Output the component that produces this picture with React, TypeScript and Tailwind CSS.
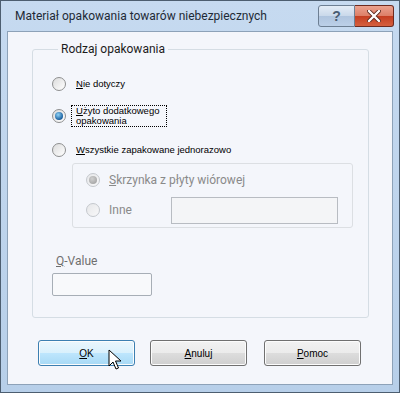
import React from "react";

const Radio = ({ checked = false, disabled = false }: { checked?: boolean; disabled?: boolean }) => (
  <span
    className={
      "flex h-[14px] w-[14px] shrink-0 items-center justify-center rounded-full border " +
      (disabled
        ? "border-[#c4c8cd] bg-gradient-to-br from-[#e6e7e9] to-[#f8f8f9]"
        : "border-[#8e8f8f] bg-gradient-to-br from-[#dcdcdc] to-[#ffffff]")
    }
  >
    {checked && (
      <span
        className={
          "h-[8px] w-[8px] rounded-full " +
          (disabled
            ? "bg-[radial-gradient(circle_at_40%_35%,#d0d0d0,#9a9a9a)]"
            : "bg-[radial-gradient(circle_at_40%_35%,#8fd3f7,#1a5f9e_70%,#0d3f73)]")
        }
      />
    )}
  </span>
);

const Button = ({ label, hot = false }: { label: React.ReactNode; hot?: boolean }) => (
  <div
    className={
      "flex h-[26px] w-[97px] items-center justify-center rounded-[3px] border text-[10px] text-black shadow-[inset_0_0_0_1px_#fcfcfc] " +
      (hot
        ? "border-[#3c7fb1] bg-[linear-gradient(#eaf6fd_0%,#d9f0fc_50%,#bee6fd_50%,#a7d9f5_100%)]"
        : "border-[#707070] bg-[linear-gradient(#f2f2f2_0%,#ebebeb_50%,#dddddd_50%,#cfcfcf_100%)]")
    }
  >
    {label}
  </div>
);

export default function App() {
  return (
    <div
      className="relative flex h-[393px] w-[400px] flex-col border border-[#4d5e70] bg-gradient-to-b from-[#c6daf0] to-[#b7cfe9]"
      style={{ fontFamily: "'Liberation Sans', Arial, sans-serif" }}
    >
      {/* title bar */}
      <div className="flex h-[30px] items-center pl-[14px] pr-[5px]">
        <span className="flex-1 text-[12px] text-[#1e2a36]" style={{ fontFamily: "Roboto, sans-serif" }}>
          Materiał opakowania towarów niebezpiecznych
        </span>
        <div className="flex h-[22px] w-[37px] items-center justify-center rounded-l-[3px] border border-[#6d7f93] bg-[linear-gradient(#e3ecf6_0%,#c9d8ea_50%,#afc4de_50%,#bcd0e8_100%)] text-[14px] font-bold text-[#4a5d72]">
          ?
        </div>
        <div className="flex h-[22px] w-[39px] items-center justify-center rounded-r-[3px] border border-l-0 border-[#6d2a1f] bg-[linear-gradient(#eba28f_0%,#dc7e66_50%,#c43d20_50%,#d5603f_100%)]">
          <svg width="14" height="12" viewBox="0 0 14 12">
            <path d="M2 1 L12 11 M12 1 L2 11" stroke="#5b2a20" strokeWidth="4" strokeLinecap="round" />
            <path d="M2 1 L12 11 M12 1 L2 11" stroke="#ffffff" strokeWidth="2.4" strokeLinecap="round" />
          </svg>
        </div>
      </div>

      {/* client area */}
      <div className="mx-[6px] mb-[7px] flex flex-1 flex-col border border-[#8da2b8] bg-[#f4f6fb]">
        <fieldset className="ml-[24px] mt-[10px] h-[276px] w-[337px] rounded-[3px] border border-[#d5dde4] pl-[19px]">
          <legend className="ml-[6px] px-[3px] text-[12px] leading-[14px] text-[#1c1c1c]" style={{ fontFamily: "Roboto, sans-serif" }}>
            Rodzaj opakowania
          </legend>

          <div className="mt-[21px] flex items-center gap-[10px]">
            <Radio />
            <span className="text-[9.5px] text-black">
              <u>N</u>ie dotyczy
            </span>
          </div>

          <div className="mt-[14px] flex items-center gap-[5px]">
            <Radio checked />
            <span className="w-[96px] border border-dotted border-black px-[4px] py-[0px] text-[9.5px] leading-[10px] text-black">
              <u>U</u>żyto dodatkowego opakowania
            </span>
          </div>

          <div className="mt-[16px] flex items-center gap-[10px]">
            <Radio />
            <span className="text-[9.5px] text-black">
              <u>W</u>szystkie zapakowane jednorazowo
            </span>
          </div>

          <div className="ml-[20px] mt-[5px] flex h-[65px] w-[281px] flex-col justify-center gap-[12px] rounded-[3px] border border-[#dcdfe3] pl-[13px]" style={{ fontFamily: "Roboto, sans-serif" }}>
            <div className="flex items-center gap-[9px]">
              <Radio checked disabled />
              <span className="text-[12px] text-[#8a8a8a]">
                <u>S</u>krzynka z płyty wiórowej
              </span>
            </div>
            <div className="flex items-center gap-[9px]">
              <Radio disabled />
              <span className="w-[53px] text-[12px] text-[#8a8a8a]">Inne</span>
              <div className="-my-[4px] h-[27px] w-[167px] border border-[#b8bcc2] bg-[#f4f5f7]" />
            </div>
          </div>

          <div className="mt-[26px] flex flex-col" style={{ fontFamily: "Roboto, sans-serif" }}>
            <span className="ml-[4px] text-[12px] leading-[14px] text-[#6f6f6f]">
              <u>Q</u>-Value
            </span>
            <div className="mt-[5px] h-[23px] w-[100px] rounded-[2px] border border-[#a7aeb6] bg-[#f8f9fb]" />
          </div>
        </fieldset>

        <div className="ml-[30px] mt-[22px] flex gap-[15px]">
          <Button hot label={<><u>O</u>K</>} />
          <Button label={<><u>A</u>nuluj</>} />
          <div className="ml-[2px]">
            <Button label={<><u>P</u>omoc</>} />
          </div>
        </div>
      </div>

      {/* mouse cursor */}
      <svg className="absolute left-[107px] top-[348px]" width="14" height="22" viewBox="0 0 14 22">
        <path d="M1 1 L1 17 L5 13 L8 20 L10.5 19 L7.5 12 L13 12 Z" fill="#ffffff" stroke="#000000" strokeWidth="1" strokeLinejoin="miter" />
      </svg>
    </div>
  );
}
